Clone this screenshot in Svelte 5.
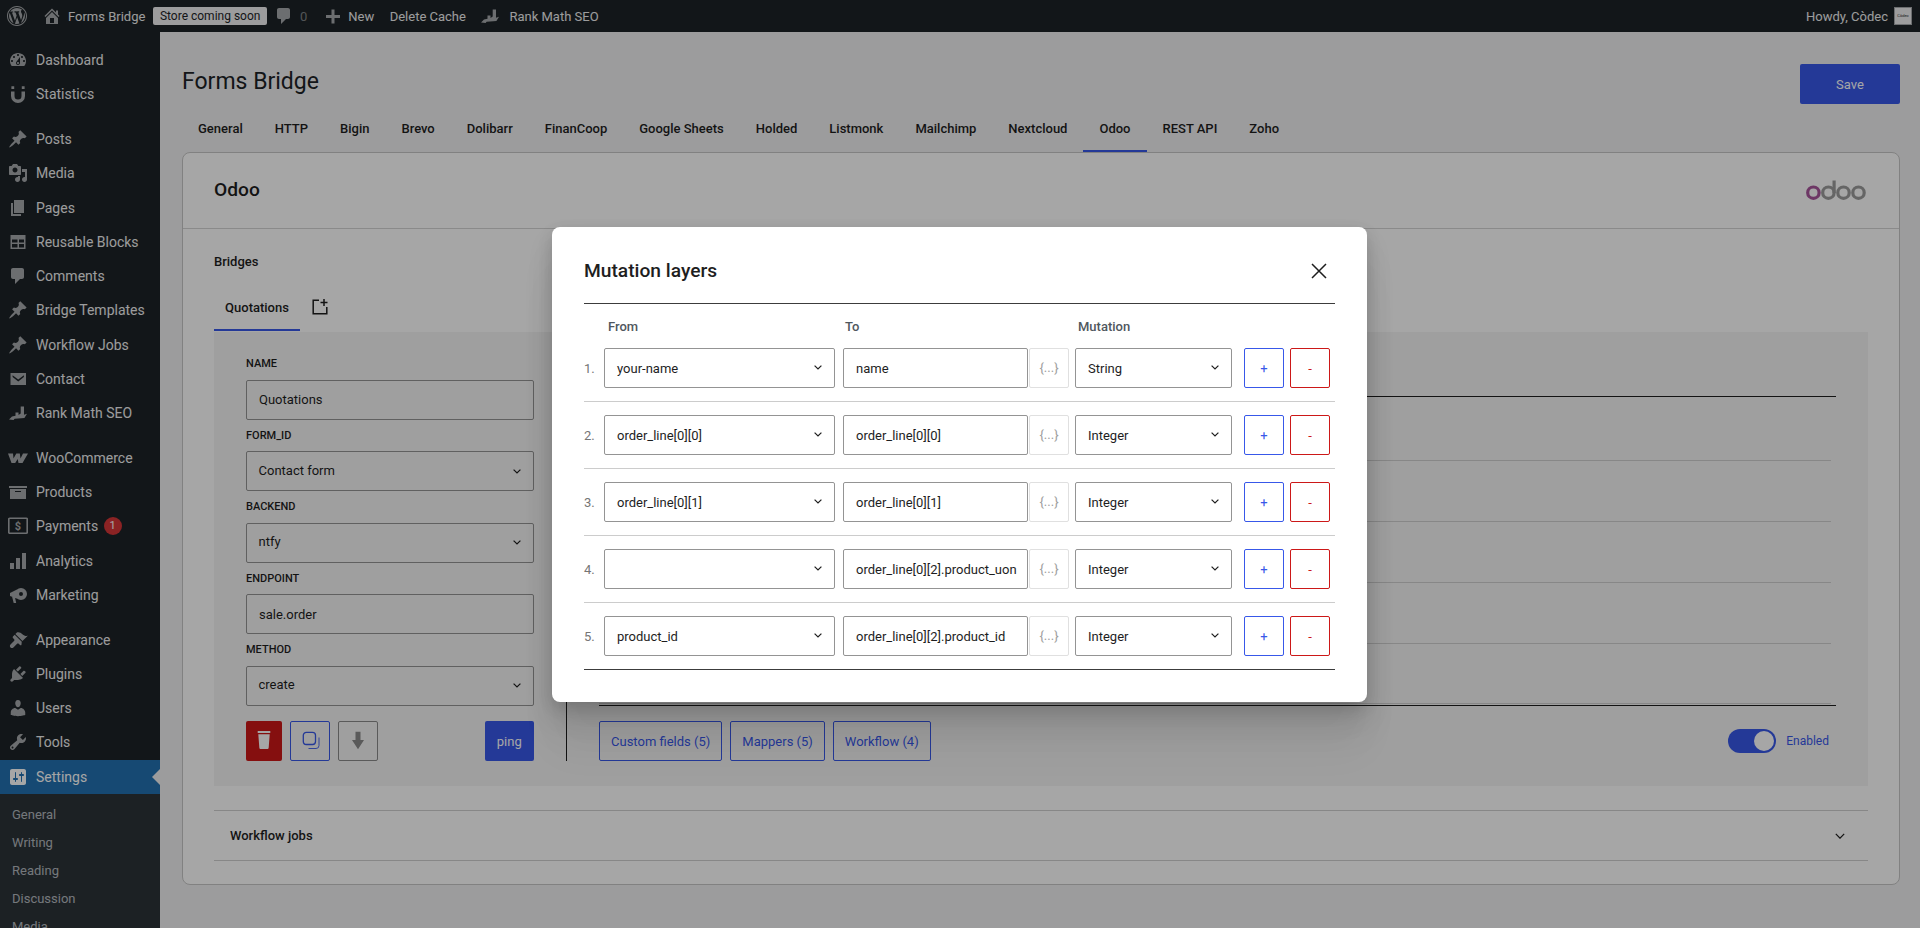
<script>
	const pin = 'M10.44 3.02l1.82-1.82 6.36 6.35-1.83 1.82c-1.05-.68-2.48-.57-3.41.36l-.75.75c-.92.93-1.04 2.35-.35 3.41l-1.83 1.82-2.41-2.41-2.8 2.79c-.42.42-3.38 2.71-3.8 2.29s1.86-3.39 2.28-3.81l2.79-2.79L4.1 9.36l1.83-1.82c1.05.69 2.48.57 3.4-.36l.75-.75c.93-.92 1.05-2.35.36-3.41z';
	const rankMath = 'M1 16.5l3-3 3.5-.8V9.5h3v2.6l2.2-1.6V3.5h3.3v8.2l3-1-2.6 4.3-6.4.6-3.4.2-1 1.2z';
	const bubble = 'M5 2h9c1.1 0 2 .9 2 2v7c0 1.1-.9 2-2 2h-2l-5 5v-5H5c-1.1 0-2-.9-2-2V4c0-1.1.9-2 2-2z';

	const menu = [
		{ label: 'Dashboard', d: 'M3.76 16h12.48c1.1-1.37 1.76-3.11 1.76-5 0-4.42-3.58-8-8-8s-8 3.58-8 8c0 1.89.66 3.63 1.76 5zM10 4c.55 0 1 .45 1 1s-.45 1-1 1-1-.45-1-1 .45-1 1-1zM6 6c.55 0 1 .45 1 1s-.45 1-1 1-1-.45-1-1 .45-1 1-1zm8 0c.55 0 1 .45 1 1s-.45 1-1 1-1-.45-1-1 .45-1 1-1zm-5.37 5.55L12 7v6c0 1.1-.9 2-2 2s-2-.9-2-2c0-.57.24-1.08.63-1.45zM4 10c.55 0 1 .45 1 1s-.45 1-1 1-1-.45-1-1 .45-1 1-1zm12 0c.55 0 1 .45 1 1s-.45 1-1 1-1-.45-1-1 .45-1 1-1zm-5 3c0-.55-.45-1-1-1s-1 .45-1 1 .45 1 1 1 1-.45 1-1z' },
		{ label: 'Statistics', d: 'M3 7.5h3.5V12a3.5 3.5 0 0 0 7 0V7.5H17V12a7 7 0 0 1-14 0zM3.4 2.2h2.8V5H3.4zM13.8 2.2h2.8V5h-2.8z' },
		{ sep: true },
		{ label: 'Posts', d: pin },
		{ label: 'Media', d: 'M13 11V4c0-.55-.45-1-1-1h-1.67L9 1H5L3.67 3H2c-.55 0-1 .45-1 1v7c0 .55.45 1 1 1h10c.55 0 1-.45 1-1zM7 4.5c1.38 0 2.5 1.12 2.5 2.5S8.38 9.5 7 9.5 4.5 8.38 4.5 7 5.62 4.5 7 4.5zM14 6h5v10.5c0 1.38-1.12 2.5-2.5 2.5S14 17.88 14 16.5s1.12-2.5 2.5-2.5c.17 0 .34.02.5.05V9h-3V6zm-4 8.05V13h2v3.5c0 1.38-1.12 2.5-2.5 2.5S7 17.88 7 16.5 8.12 14 9.5 14c.17 0 .34.02.5.05z' },
		{ label: 'Pages', d: 'M6 15V2h10v13H6zm-1 1h8v2H3V5h2v11z' },
		{ label: 'Reusable Blocks', d: 'M2.5 3h15v14h-15zM4 7.5v3h5.5v-3zm7 0v3h5v-3zM4 12v3.5h5.5V12zm7 0v3.5h5V12z', rule: 'evenodd' },
		{ label: 'Comments', d: bubble },
		{ label: 'Bridge Templates', d: pin },
		{ label: 'Workflow Jobs', d: pin },
		{ label: 'Contact', d: 'M2.5 4h15.5v12H2.5zM4.6 6.2l5.65 4.4 5.65-4.4v1.9l-5.65 4.4-5.65-4.4z', rule: 'evenodd' },
		{ label: 'Rank Math SEO', d: rankMath },
		{ sep: true },
		{ label: 'WooCommerce', d: 'M0 5.5h5l.5 5 2.8-5h3.5l.7 5 2.5-5H20l-5.5 9.5h-4l-.8-4-2.5 4H3.5z' },
		{ label: 'Products', d: 'M19 4v2H1V4h18zM2 7h16v10H2V7zm11 3V9H7v1h6z' },
		{ label: 'Payments', badge: 1, dollar: true },
		{ label: 'Analytics', d: 'M18 18V2h-4v16h4zm-6 0V7H8v11h4zm-6 0v-6H2v6h4z' },
		{ label: 'Marketing', d: 'M13 3a6 6 0 1 1 0 12a6 6 0 1 1 0-12zM13 7a2 2 0 1 0 0 4a2 2 0 1 0 0-4zM2 8L10 4V14L2 11zM4 11.5l3 1 1.2 5.5H5.7z' },
		{ sep: true },
		{ label: 'Appearance', d: 'M14.48 11.06L7.41 3.99l1.5-1.5c.5-.56 2.3-.47 3.51.32 1.21.8 1.43 1.28 2.91 2.1 1.18.64 2.45 1.26 4.45.85zm-.71.71L6.7 4.7 4.93 6.47c-.39.39-.39 1.02 0 1.41l1.06 1.06c.59.59.59 1.54 0 2.12L2.5 14.5c-.8.8-.8 2.1 0 2.9s2.1.8 2.9 0l3.44-3.5c.58-.59 1.53-.59 2.12 0l1.06 1.06c.39.39 1.02.39 1.41 0z' },
		{ label: 'Plugins', d: 'M13.11 4.36L9.87 7.6 8 5.73l3.24-3.24c.35-.34 1.05-.2 1.56.32.52.51.66 1.21.31 1.55zm-8 1.77l.91-1.12 9.01 9.01-1.19.84c-.71.71-2.63 1.16-3.82 1.16H6.14L4.9 17.26c-.59.59-1.54.59-2.12 0-.59-.58-.59-1.53 0-2.12l1.24-1.24v-3.88c0-1.13.4-3.19 1.09-3.89zm7.26 3.97l3.24-3.24c.34-.35 1.04-.21 1.55.31.52.51.66 1.21.31 1.55l-3.24 3.25z' },
		{ label: 'Users', d: 'M10 9.25c-2.27 0-2.73-3.44-2.73-3.44C7 4.02 7.82 2 9.97 2c2.16 0 2.98 2.02 2.71 3.81 0 0-.41 3.44-2.68 3.44zm0 2.57L12.72 10c2.39 0 4.52 2.33 4.52 4.53v2.49s-3.65 1.13-7.24 1.13c-3.65 0-7.24-1.13-7.24-1.13v-2.49c0-2.25 1.94-4.48 4.47-4.48z' },
		{ label: 'Tools', d: 'M16.68 9.77c-1.34 1.34-3.3 1.67-4.95.99l-5.41 6.52c-.99.99-2.59.99-3.58 0s-.99-2.59 0-3.57l6.52-5.42c-.68-1.65-.35-3.61.99-4.95 1.28-1.28 3.12-1.62 4.72-1.06l-2.89 2.89 2.82 2.82 2.86-2.87c.53 1.58.18 3.39-1.08 4.65zM3.81 16.21c.4.39 1.04.39 1.43 0 .4-.4.4-1.04 0-1.43-.39-.4-1.03-.4-1.43 0-.39.39-.39 1.03 0 1.43z' },
		{ label: 'Settings', active: true, d: 'M18 16V4c0-1.1-.9-2-2-2H4c-1.1 0-2 .9-2 2v12c0 1.1.9 2 2 2h12c1.1 0 2-.9 2-2zM8 11h1c.55 0 1 .45 1 1s-.45 1-1 1H8v1.5c0 .28-.22.5-.5.5s-.5-.22-.5-.5V13H6c-.55 0-1-.45-1-1s.45-1 1-1h1V5.5c0-.28.22-.5.5-.5s.5.22.5.5V11zm5-2h-1c-.55 0-1-.45-1-1s.45-1 1-1h1V5.5c0-.28.22-.5.5-.5s.5.22.5.5V7h1c.55 0 1 .45 1 1s-.45 1-1 1h-1v5.5c0 .28-.22.5-.5.5s-.5-.22-.5-.5V9z' }
	];

	const submenu = ['General', 'Writing', 'Reading', 'Discussion', 'Media'];

	const tabs = ['General', 'HTTP', 'Bigin', 'Brevo', 'Dolibarr', 'FinanCoop', 'Google Sheets', 'Holded', 'Listmonk', 'Mailchimp', 'Nextcloud', 'Odoo', 'REST API', 'Zoho'];

	const layers = [
		{ from: 'your-name', to: 'name', cast: 'String' },
		{ from: 'order_line[0][0]', to: 'order_line[0][0]', cast: 'Integer' },
		{ from: 'order_line[0][1]', to: 'order_line[0][1]', cast: 'Integer' },
		{ from: '', to: 'order_line[0][2].product_uon', cast: 'Integer' },
		{ from: 'product_id', to: 'order_line[0][2].product_id', cast: 'Integer' }
	];
</script>

{#snippet chevron()}
	<svg class="chev" viewBox="0 0 8 5" width="8" height="5" aria-hidden="true">
		<path d="M.6.6 4 4 7.400.6" fill="none" stroke="#1e1e1e" stroke-width="1.200" />
	</svg>
{/snippet}

<div class="page">
	<header class="adminbar">
		<svg class="logo" viewBox="0 0 20 20" width="20" height="20"><path d="M20 10c0-5.52-4.48-10-10-10S0 4.48 0 10s4.48 10 10 10 10-4.48 10-10zM10 1.01c4.96 0 8.99 4.03 8.99 8.99s-4.03 8.99-8.99 8.99S1.01 14.96 1.01 10 5.04 1.01 10 1.01zM8.01 14.82L4.96 6.61c.49-.03 1.05-.08 1.05-.08.43-.05.38-1.01-.06-.99 0 0-1.29.1-2.13.1-.15 0-.33 0-.52-.01 1.44-2.17 3.9-3.6 6.7-3.6 2.09 0 3.99.79 5.41 2.09-.6-.08-1.45.35-1.45 1.42 0 .66.38 1.22.79 1.88.31.54.5 1.22.5 2.21 0 1.34-1.27 4.48-1.27 4.48l-2.71-7.5c.48-.03.75-.16.75-.16.43-.05.38-1.1-.05-1.08 0 0-1.3.11-2.14.11-.78 0-2.11-.11-2.11-.11-.43-.02-.48 1.06-.05 1.08l.84.08 1.12 3.04zm6.02 2.15L16.64 10s.67-1.69.39-3.81c.63 1.14.94 2.42.94 3.81 0 2.96-1.56 5.58-3.94 6.97zM2.68 6.77L6.5 17.25c-2.67-1.3-4.47-4.07-4.47-7.25 0-1.17.2-2.23.65-3.23zm7.45 4.53l2.29 6.25c-.75.27-1.57.42-2.42.42-.72 0-1.41-.11-2.06-.3z" /></svg>
		<svg class="home" viewBox="0 0 20 20" width="20" height="20"><path d="M16 8.5l1.53 1.53-1.06 1.06L10 4.62l-6.47 6.47-1.06-1.06L10 2.5l4 4v-2h2v4zm-6-2.46l6 5.99V18H4v-5.97zM12 17v-5H8v5h4z" /></svg>
		<span class="site">Forms Bridge</span>
		<span class="store">Store coming soon</span>
		<svg class="bubble" viewBox="0 0 20 20" width="20" height="20"><path d={bubble} /></svg>
		<span class="zero">0</span>
		<svg class="plus" viewBox="0 0 20 20" width="20" height="20"><path d="M17 9v3h-5.500v5.500h-3V12H3V9h5.500V3.500h3V9z" /></svg>
		<span class="new">New</span>
		<span class="cache">Delete Cache</span>
		<svg class="rank" viewBox="0 0 20 20" width="20" height="20"><path d={rankMath} /></svg>
		<span class="rank-label">Rank Math SEO</span>
		<span class="howdy">Howdy, Còdec</span>
		<span class="avatar">Còdec</span>
	</header>

	<div class="layout">
		<nav class="sidebar">
			{#each menu as item}
				{#if item.sep}
					<div class="sep"></div>
				{:else}
					<div class="item" class:active={item.active}>
						{#if item.dollar}
							<svg class="icon" viewBox="0 0 20 20" width="20" height="20">
								<rect x="0.750" y="2.250" width="18.500" height="15" rx="1" fill="none" stroke="currentColor" stroke-width="1.700" />
								<text x="10" y="14.300" text-anchor="middle" font-size="11" font-weight="700" fill="currentColor">$</text>
							</svg>
						{:else}
							<svg class="icon" viewBox="0 0 20 20" width="20" height="20"><path d={item.d} fill-rule={item.rule ?? 'nonzero'} /></svg>
						{/if}
						<span>{item.label}</span>
						{#if item.badge}<b class="badge">{item.badge}</b>{/if}
					</div>
				{/if}
			{/each}
			<div class="submenu">
				{#each submenu as sub}
					<div class="subitem">{sub}</div>
				{/each}
			</div>
		</nav>

		<main class="main">
			<div class="titlebar">
				<h1>Forms Bridge</h1>
				<button class="save">Save</button>
			</div>
			<div class="tabs">
				{#each tabs as tab}
					<div class="tab" class:current={tab === 'Odoo'}>{tab}</div>
				{/each}
			</div>

			<section class="card">
				<div class="card-head">
					<h2>Odoo</h2>
					<svg viewBox="0 0 60 20" width="60" height="20" fill="none" stroke-width="3.200">
						<circle cx="7.400" cy="12.700" r="5.700" stroke="#a8559c" />
						<circle cx="22.400" cy="12.700" r="5.700" stroke="#9c9c9c" />
						<path d="M28.100 13V0.500" stroke="#9c9c9c" />
						<circle cx="37.500" cy="12.700" r="5.700" stroke="#9c9c9c" />
						<circle cx="52.500" cy="12.700" r="5.700" stroke="#9c9c9c" />
					</svg>
				</div>
				<div class="card-body">
					<div class="section-title">Bridges</div>
					<div class="bridge-tabs">
						<div class="bridge-tab">Quotations</div>
						<svg class="add" viewBox="0 0 18 18" width="18" height="18" fill="none" stroke="#1e1e1e" stroke-width="1.500">
							<path d="M8 2.200H2.200v13.600h13.600V9" />
							<path d="M13 1v7M9.500 4.500h7" />
						</svg>
					</div>

					<div class="panel">
						<div class="form">
							<span class="label">Name</span>
							<input class="field" value="Quotations" readonly />
							<span class="label">Form_id</span>
							<div class="select field"><span>Contact form</span>{@render chevron()}</div>
							<span class="label">Backend</span>
							<div class="select field"><span>ntfy</span>{@render chevron()}</div>
							<span class="label">Endpoint</span>
							<input class="field" value="sale.order" readonly />
							<span class="label">Method</span>
							<div class="select field"><span>create</span>{@render chevron()}</div>

							<div class="actions">
								<button class="square danger" aria-label="Remove">
									<svg viewBox="0 0 20 20" width="20" height="20" fill="#fff"><path d="M3.700 0h12.600v2H3.700zM4.300 3.200h11.400l-1 13.200c-.1 1-.6 1.600-1.600 1.600H6.900c-1 0-1.500-.6-1.600-1.600z" /></svg>
								</button>
								<button class="square copy" aria-label="Copy">
									<svg viewBox="0 0 20 20" width="20" height="20" fill="none" stroke="#3858e9" stroke-width="1.300">
										<rect x="3.300" y="1.300" width="12.200" height="12.200" rx="3" />
										<path d="M19 6.500v8a3 3 0 0 1-3 3H8.500" stroke-width="0.900" />
									</svg>
								</button>
								<button class="square down" aria-label="Download">
									<svg viewBox="0 0 20 20" width="20" height="20" fill="#8a8a8a"><path d="M7.500 .7h5v8.300H16L10 18.200 4 9h3.500z" /></svg>
								</button>
								<button class="ping">ping</button>
							</div>
						</div>

						<div class="detail">
							<div class="table">
								<div class="table-head"></div>
								{#each { length: 5 } as _}
									<div class="table-row"></div>
								{/each}
							</div>
							<div class="detail-foot">
								<button class="outline">Custom fields (5)</button>
								<button class="outline">Mappers (5)</button>
								<button class="outline">Workflow (4)</button>
								<div class="toggle"><span class="knob"></span></div>
								<span class="enabled">Enabled</span>
							</div>
						</div>
					</div>

					<div class="accordion">
						<span>Workflow jobs</span>
						<svg viewBox="0 0 10 6" width="10" height="6" fill="none" stroke="#1e1e1e" stroke-width="1.200"><path d="M.8.8 5 5.200 9.200.8" /></svg>
					</div>
				</div>
			</section>
		</main>
	</div>

	<div class="overlay">
		<div class="modal" role="dialog">
			<div class="modal-head">
				<h3>Mutation layers</h3>
				<svg viewBox="0 0 16 16" width="16" height="16" fill="none" stroke="#1e1e1e" stroke-width="1.500"><path d="M1 1l14 14M15 1 1 15" /></svg>
			</div>
			<div class="columns">
				<span class="col-from">From</span>
				<span class="col-to">To</span>
				<span class="col-cast">Mutation</span>
			</div>
			<div class="rows">
				{#each layers as layer, i}
					<div class="row">
						<span class="index">{i + 1}.</span>
						<div class="select cell-from"><span>{layer.from}</span>{@render chevron()}</div>
						<input class="cell-to" value={layer.to} readonly />
						<button class="cell-json">{'{...}'}</button>
						<div class="select cell-cast"><span>{layer.cast}</span>{@render chevron()}</div>
						<button class="cell-add">+</button>
						<button class="cell-del">-</button>
					</div>
				{/each}
			</div>
		</div>
	</div>
</div>

<style>
	:global(body) {
		margin: 0;
		background: #f0f0f1;
		font-family: Roboto, 'Liberation Sans', sans-serif;
		font-size: 13px;
		color: #1e1e1e;
	}

	button,
	input {
		font: inherit;
		box-sizing: border-box;
	}

	button {
		cursor: pointer;
	}

	.page {
		position: relative;
		height: 100vh;
		overflow: hidden;
		display: flex;
		flex-direction: column;
	}

	/* admin bar */
	.adminbar {
		flex: none;
		height: 32px;
		display: flex;
		align-items: center;
		background: #1d2327;
		color: #f0f0f1;
		white-space: nowrap;
	}

	.adminbar svg {
		flex: none;
		fill: #a7aaad;
	}

	.logo {
		margin-left: 7px;
	}

	.home {
		margin-left: 14.500px;
	}

	.site {
		margin-left: 6.500px;
	}

	.store {
		margin-left: 8px;
		padding: 0 6.500px;
		height: 18px;
		line-height: 18px;
		font-size: 12px;
		background: #f0f0f1;
		color: #1d2327;
		border-radius: 2px;
	}

	.bubble {
		margin-left: 7px;
	}

	.zero {
		margin-left: 6px;
		color: #a7aaad;
		opacity: 0.7;
	}

	.plus {
		margin-left: 16px;
	}

	.new {
		margin-left: 5px;
	}

	.cache {
		margin-left: 15.500px;
	}

	.rank {
		margin-left: 14.500px;
	}

	.rank-label {
		margin-left: 9px;
	}

	.howdy {
		margin-left: auto;
	}

	.avatar {
		flex: none;
		box-sizing: border-box;
		width: 18px;
		height: 18px;
		margin: 0 8px 0 6px;
		border: 1px solid #a7aaad;
		background: #f0f0f1;
		color: #1d2327;
		font-size: 4px;
		line-height: 16px;
		text-align: center;
		overflow: hidden;
	}

	/* sidebar */
	.layout {
		flex: 1;
		display: flex;
		min-height: 0;
	}

	.sidebar {
		flex: none;
		width: 160px;
		padding-top: 11px;
		background: #1d2327;
		color: #f0f0f1;
		font-size: 14px;
	}

	.sep {
		height: 10.500px;
	}

	.item {
		position: relative;
		display: flex;
		align-items: center;
		height: 34.250px;
		padding-left: 7.500px;
		gap: 8.500px;
		white-space: nowrap;
	}

	.icon {
		flex: none;
		fill: #a7aaad;
		color: #a7aaad;
	}

	.item.active {
		background: #2271b1;
		color: #fff;
	}

	.item.active .icon {
		fill: #fff;
	}

	.item.active::after {
		content: '';
		position: absolute;
		right: 0;
		top: 50%;
		margin-top: -8px;
		border: 8px solid transparent;
		border-right-color: #f0f0f1;
		border-left-width: 0;
	}

	.badge {
		width: 18px;
		height: 18px;
		margin-left: -3px;
		border-radius: 50%;
		background: #d63638;
		color: #fff;
		font-size: 11px;
		font-weight: 400;
		line-height: 18px;
		text-align: center;
	}

	.submenu {
		padding-top: 7px;
		background: #2c3338;
		height: 200px;
	}

	.subitem {
		height: 28px;
		line-height: 28px;
		padding-left: 12px;
		font-size: 13px;
		color: rgba(240, 246, 252, 0.7);
	}

	/* main area */
	.main {
		flex: 1;
		min-width: 0;
		padding: 32px 20px 0 21.500px;
	}

	.titlebar {
		display: flex;
		align-items: center;
		justify-content: space-between;
		height: 40px;
	}

	h1 {
		margin: 0 0 5px 0.500px;
		font-size: 23px;
		font-weight: 400;
		color: #1d2327;
	}

	.save {
		width: 100px;
		height: 40px;
		border: 0;
		border-radius: 2px;
		background: #3858e9;
		color: #fff;
	}

	.tabs {
		display: flex;
		height: 48px;
		padding-left: 0.500px;
	}

	.tab {
		padding: 0 16px;
		line-height: 49px;
		font-weight: 500;
		white-space: nowrap;
	}

	.tab.current {
		box-shadow: inset 0 -2px 0 #3858e9;
	}

	.card {
		box-sizing: border-box;
		height: 733px;
		background: #fff;
		border: 1px solid #c7c7c7;
		border-radius: 8px;
	}

	.card-head {
		box-sizing: border-box;
		height: 76px;
		padding: 0 33px 2px 31.500px;
		display: flex;
		align-items: center;
		justify-content: space-between;
		border-bottom: 1px solid #d4d4d4;
	}

	h2 {
		margin: 0;
		font-size: 19.200px;
		font-weight: 500;
	}

	.card-body {
		padding: 25px 31px 0 31.500px;
	}

	.section-title {
		height: 16px;
		line-height: 16px;
		font-weight: 500;
	}

	.bridge-tabs {
		margin-top: 13px;
		height: 48px;
		display: flex;
		align-items: center;
		gap: 11px;
	}

	.bridge-tab {
		width: 86px;
		height: 48px;
		line-height: 49px;
		text-align: center;
		font-weight: 500;
		box-shadow: inset 0 -2px 0 #3858e9;
	}

	.panel {
		box-sizing: border-box;
		height: 454px;
		margin-top: 1px;
		padding: 24px 32px 25px;
		display: flex;
		background: #f5f5f5;
	}

	.form {
		flex: none;
		width: 287.500px;
		margin-right: 32.500px;
	}

	.label {
		display: block;
		height: 16px;
		margin-bottom: 7.500px;
		line-height: 16px;
		font-size: 11px;
		font-weight: 500;
		text-transform: uppercase;
	}

	.field {
		display: flex;
		box-sizing: border-box;
		width: 100%;
		height: 40px;
		margin-bottom: 8px;
		padding: 0 12px;
		background: transparent;
		border: 1px solid #949494;
		border-radius: 2px;
		color: #1e1e1e;
		outline: 0;
	}

	.select {
		align-items: center;
		justify-content: space-between;
		box-sizing: border-box;
		display: flex;
	}

	.select.field {
		padding-left: 11.500px;
	}

	.select.field span {
		margin-top: -2px;
	}

	.chev {
		flex: none;
	}

	.actions {
		display: flex;
		gap: 8px;
		margin-top: 15.500px;
	}

	.square {
		width: 40px;
		height: 40px;
		padding: 0;
		display: flex;
		align-items: center;
		justify-content: center;
		background: transparent;
		border: 1px solid #8a8a8a;
		border-radius: 2px;
	}

	.square.danger {
		width: 36px;
		background: #cc1818;
		border: 0;
	}

	.square.copy {
		border-color: #3858e9;
	}

	.ping {
		margin-left: auto;
		width: 48.500px;
		height: 40px;
		border: 0;
		border-radius: 2px;
		background: #3858e9;
		color: #fff;
	}

	.detail {
		flex: 1;
		min-width: 0;
		padding-left: 32px;
		display: flex;
		flex-direction: column;
		justify-content: space-between;
		border-left: 1px solid #1e1e1e;
	}

	.table {
		border-bottom: 1px solid #1e1e1e;
		padding-bottom: 1px;
	}

	.table-head {
		height: 40px;
		border-bottom: 1px solid #1e1e1e;
		margin-bottom: 3.500px;
	}

	.table-row {
		box-sizing: border-box;
		height: 60.800px;
		margin-right: 5px;
		border-bottom: 1px solid #d0d0d0;
	}

	.detail-foot {
		display: flex;
		align-items: center;
		gap: 8px;
	}

	.outline {
		height: 40px;
		padding: 0 11px;
		background: transparent;
		border: 1px solid #3858e9;
		border-radius: 2px;
		color: #3858e9;
	}

	.toggle {
		box-sizing: border-box;
		width: 48px;
		height: 24px;
		margin-left: auto;
		padding: 2px;
		display: flex;
		justify-content: flex-end;
		background: #3858e9;
		border-radius: 12px;
	}

	.knob {
		width: 20px;
		height: 20px;
		border-radius: 50%;
		background: #fff;
	}

	.enabled {
		margin-right: 7px;
		margin-left: 2px;
		color: #3858e9;
		font-size: 12px;
	}

	.accordion {
		box-sizing: border-box;
		height: 51px;
		margin-top: 24px;
		padding: 0 23px 0 16px;
		display: flex;
		align-items: center;
		justify-content: space-between;
		border-top: 1px solid #d0d0d0;
		border-bottom: 1px solid #d0d0d0;
		font-weight: 500;
	}

	/* mutation layers modal */
	.overlay {
		position: absolute;
		inset: 0;
		padding-right: 1px;
		display: flex;
		align-items: center;
		justify-content: center;
		background: rgba(0, 0, 0, 0.35);
	}

	.modal {
		box-sizing: border-box;
		width: 815px;
		height: 475px;
		padding: 0 32px;
		background: #fff;
		border-radius: 8px;
		box-shadow:
			0 5px 15px rgba(0, 0, 0, 0.12),
			0 15px 27px rgba(0, 0, 0, 0.1),
			0 30px 36px rgba(0, 0, 0, 0.06),
			0 50px 43px rgba(0, 0, 0, 0.03);
	}

	.modal-head {
		box-sizing: border-box;
		height: 77px;
		padding: 12px 8px 0 0;
		display: flex;
		align-items: center;
		justify-content: space-between;
		border-bottom: 1px solid #3c3c3c;
	}

	h3 {
		margin: 0;
		font-size: 19.200px;
		font-weight: 500;
	}

	.columns {
		display: flex;
		align-items: center;
		height: 15px;
		padding-top: 15px;
		margin-bottom: 1px;
		font-weight: 500;
		color: #50575e;
	}

	.col-from {
		margin-left: 24px;
		width: 237px;
	}

	.col-to {
		width: 233px;
	}

	.rows {
		border-bottom: 1px solid #3c3c3c;
	}

	.row {
		box-sizing: border-box;
		height: 67px;
		padding-top: 13px;
		display: flex;
		border-bottom: 1px solid #ccc;
	}

	.row:last-child {
		height: 66px;
		border-bottom: 0;
	}

	.row > * {
		box-sizing: border-box;
		height: 40px;
		flex: none;
	}

	.index {
		width: 20px;
		line-height: 42px;
		color: #757575;
	}

	.cell-from,
	.cell-cast {
		padding: 0 12px;
		border: 1px solid #949494;
		border-radius: 2px;
		color: #1e1e1e;
	}

	.cell-from span,
	.cell-cast span {
		margin-top: 1px;
	}

	.cell-from {
		width: 230.500px;
	}

	.cell-to {
		width: 184.500px;
		margin-left: 8.500px;
		padding: 1px 8px 0 12px;
		background: #fff;
		border: 1px solid #949494;
		border-radius: 2px;
		color: #1e1e1e;
		outline: 0;
	}

	.cell-json {
		width: 40px;
		margin-left: 1.500px;
		padding: 0;
		background: #fff;
		border: 1px solid #e0e0e0;
		border-radius: 2px;
		color: #a0a0a0;
	}

	.cell-cast {
		width: 156.500px;
		margin-left: 6px;
	}

	.cell-add,
	.cell-del {
		width: 40px;
		padding: 1px 0 0;
		background: #fff;
		border-radius: 2px;
	}

	.cell-add {
		margin-left: 12.500px;
		border: 1px solid #3858e9;
		color: #3858e9;
	}

	.cell-del {
		margin-left: 6px;
		border: 1px solid #cc1818;
		color: #cc1818;
	}
</style>
